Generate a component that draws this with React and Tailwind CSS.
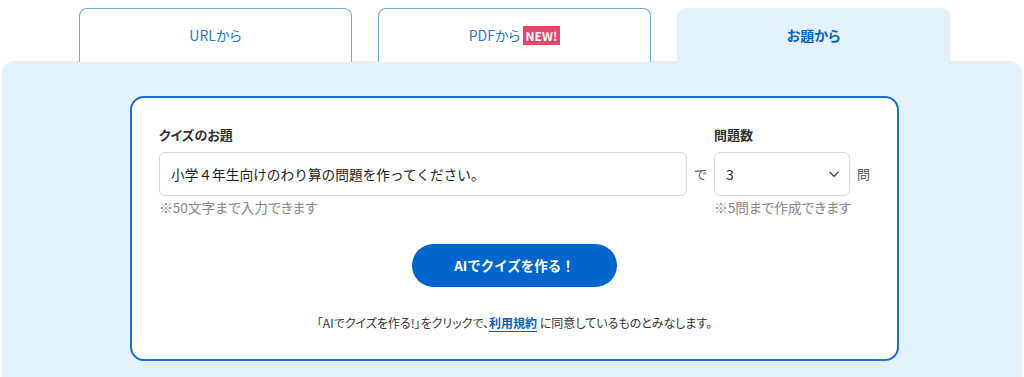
import React from 'react';

const FONT = { fontFamily: '"Noto Sans CJK JP", "Noto Sans", sans-serif' };

function Tab({ active, children }) {
  return (
    <div
      className={`w-[273px] h-[54px] flex items-center justify-center rounded-t-[8px] text-[14px] ${
        active
          ? 'bg-[#e3f1fb] text-[#0b60c2] font-bold'
          : 'bg-white border border-b-0 border-[#6ea6e6] text-[#2a78d6]'
      }`}
    >
      {children}
    </div>
  );
}

export default function App() {
  return (
    <div className="w-[1024px] h-[377px] bg-white overflow-hidden [font-feature-settings:'palt']" style={FONT}>
      {/* Tabs */}
      <div className="flex gap-[26px] pl-[79px] pt-[8px]">
        <Tab>URLから</Tab>
        <Tab>
          <span>PDFから</span>
          <span className="ml-[2px] bg-[#ee4170] text-white text-[12px] font-bold px-[3px] leading-[19px]">NEW!</span>
        </Tab>
        <Tab active>お題から</Tab>
      </div>

      {/* Panel */}
      <div className="mx-[2px] -mt-[1px] bg-[#e3f1fb] rounded-[12px] pt-[35px] pb-[40px] pl-[128px]">
        <div className="w-[769px] bg-white border-2 border-[#1b6fd3] rounded-[14px] px-[27px] pt-[27px] pb-[26px]">
          <div className="flex items-start">
            <div className="flex-1">
              <div className="text-[13px] font-bold text-[#333] leading-[20px] mb-[7px]">クイズのお題</div>
              <div className="flex items-center">
                <div className="flex-1 h-[44px] border border-[#d9d9d9] rounded-[6px] flex items-center px-[11px] text-[13.7px] text-[#222] [font-feature-settings:normal]">
                  小学４年生向けのわり算の問題を作ってください。
                </div>
                <span className="w-[27px] text-center text-[13px] text-[#555]">で</span>
              </div>
              <div className="mt-[1px] text-[13.7px] text-[#888] leading-[20px]">※50文字まで入力できます</div>
            </div>
            <div>
              <div className="text-[13px] font-bold text-[#333] leading-[20px] mb-[7px]">問題数</div>
              <div className="flex items-center">
                <div className="w-[136px] h-[44px] border border-[#d9d9d9] rounded-[6px] flex items-center justify-between pl-[11px] pr-[8px] text-[14px] text-[#222]">
                  <span>3</span>
                  <svg width="14" height="14" viewBox="0 0 24 24" fill="none" stroke="#333" strokeWidth="2" strokeLinecap="round" strokeLinejoin="round">
                    <path d="M5 9l7 7 7-7" />
                  </svg>
                </div>
                <span className="ml-[7px] text-[13px] text-[#555]">問</span>
              </div>
              <div className="mt-[1px] text-[13.7px] text-[#888] leading-[20px]">※5問まで作成できます</div>
            </div>
          </div>

          <div className="flex justify-center mt-[27px]">
            <button className="w-[205px] h-[43px] rounded-full bg-[#0066cc] text-white text-[13.5px] font-bold [font-feature-settings:normal]">
              AIでクイズを作る！
            </button>
          </div>

          <p className="mt-[26px] text-center text-[12px] text-[#333] leading-[20px]">
            「AIでクイズを作る!」をクリックで、
            <a className="text-[#0b60c2] font-bold border-b border-[#0b60c2]">利用規約</a>
            {' '}に同意しているものとみなします。
          </p>
        </div>
      </div>
    </div>
  );
}
